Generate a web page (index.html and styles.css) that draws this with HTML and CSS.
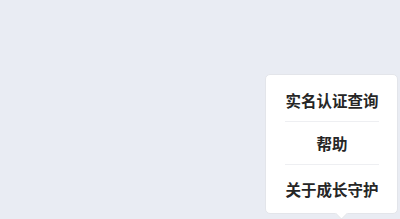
FILE: index.html
```html
<!DOCTYPE html>
<html lang="zh">
<head>
    <meta charset="UTF-8">
    <meta name="viewport" content="width=device-width, initial-scale=1.0">
    <title>菜单</title>
    <link rel="stylesheet" href="styles.css">
</head>
<body>
    <div class="page">
        <div class="menu">
            <div class="menu-item">实名认证查询</div>
            <div class="menu-item">帮助</div>
            <div class="menu-item">关于成长守护</div>
            <span class="arrow"></span>
        </div>
    </div>
</body>
</html>
```
FILE: styles.css
```css
html, body {
    margin: 0;
    padding: 0;
}
body {
    background-color: #e9ecf3;
    font-family: "Noto Sans CJK SC", "Noto Sans", sans-serif;
    width: 400px;
    height: 219px;
    overflow: hidden;
}
.page {
    display: flex;
    justify-content: flex-end;
    padding: 74px 2px 0 0;
}
.menu {
    position: relative;
    width: 133px;
    box-sizing: border-box;
    background-color: #fff;
    border: 1px solid #e3e5ea;
    border-radius: 5px;
    padding: 4px 0 1px;
}
.menu-item {
    height: 43px;
    display: flex;
    align-items: center;
    justify-content: center;
    font-size: 15.5px;
    font-weight: bold;
    color: #262626;
    margin: 0 18px 0 19px;
    border-bottom: 1px solid #eeeff2;
    box-sizing: border-box;
}
.menu-item:last-of-type {
    height: 47px;
    border-bottom: none;
}
.arrow {
    position: absolute;
    left: 71px;
    bottom: -5px;
    width: 8px;
    height: 8px;
    background-color: #fff;
    border-right: 1px solid #e3e5ea;
    border-bottom: 1px solid #e3e5ea;
    transform: rotate(45deg);
}
```
